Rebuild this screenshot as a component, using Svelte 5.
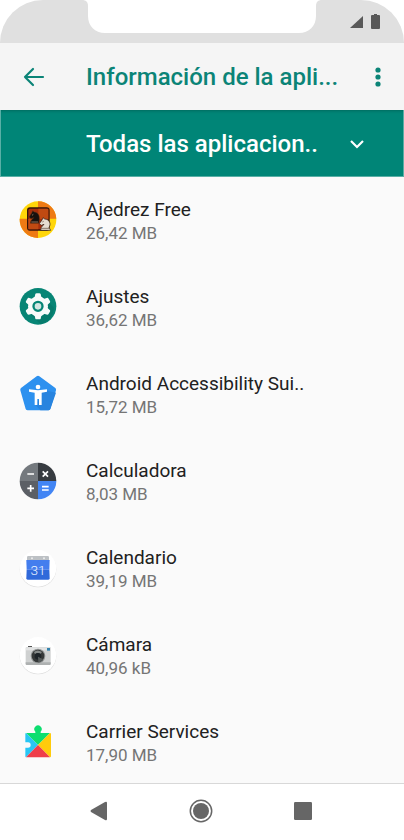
<script>
  const apps = [
    { id: 'chess', name: 'Ajedrez Free', size: '26,42 MB' },
    { id: 'settings', name: 'Ajustes', size: '36,62 MB' },
    { id: 'access', name: 'Android Accessibility Sui..', size: '15,72 MB' },
    { id: 'calc', name: 'Calculadora', size: '8,03 MB' },
    { id: 'calendar', name: 'Calendario', size: '39,19 MB' },
    { id: 'camera', name: 'Cámara', size: '40,96 kB' },
    { id: 'carrier', name: 'Carrier Services', size: '17,90 MB' }
  ];
  const teeth = [0, 60, 120, 180, 240, 300];
</script>

<div class="phone">
  <div class="status">
    <svg class="notch" width="240" height="33" viewBox="0 0 240 33" aria-hidden="true">
      <path d="M0 0H240C236 0 234 2 234 6V16C234 26 227 33 217 33H23C13 33 6 26 6 16V6C6 2 4 0 0 0Z" fill="#fff" />
    </svg>
    <svg class="signals" width="32" height="16" viewBox="0 0 32 16" aria-hidden="true">
      <path d="M13 2V14H0Z" fill="#595959" />
      <path d="M24 0H27V1H29Q30 1 30 2V14Q30 15 29 15H22Q21 15 21 14V2Q21 1 22 1H24Z" fill="#595959" />
    </svg>
  </div>

  <header>
    <button class="back" aria-label="Atrás">
      <svg width="22" height="20" viewBox="0 0 22 20">
        <path d="M20 10H2M10 2L2 10L10 18" fill="none" stroke="#0b8477" stroke-width="2.2" stroke-linecap="round" stroke-linejoin="round" />
      </svg>
    </button>
    <h1>Información de la apli...</h1>
    <button class="more" aria-label="Más opciones">
      <svg width="6" height="20" viewBox="0 0 6 20" fill="#0b8477">
        <circle cx="3" cy="3" r="2.6" /><circle cx="3" cy="10" r="2.6" /><circle cx="3" cy="17" r="2.6" />
      </svg>
    </button>
  </header>

  <div class="filter">
    <select aria-label="Filtrar aplicaciones">
      <option>Todas las aplicacion..</option>
    </select>
    <svg class="chevron" width="16" height="10" viewBox="0 0 16 10" aria-hidden="true">
      <path d="M2 2L8 8L14 2" fill="none" stroke="#fff" stroke-width="2.2" />
    </svg>
  </div>

  <ul>
    {#each apps as app (app.id)}
      <li>
        <svg class="icon" width="40" height="40" viewBox="24 30 120 120" aria-hidden="true">
          {#if app.id === 'chess'}
            <circle cx="84" cy="89" r="55" fill="#ffd60a" />
            <path d="M84 34A55 55 0 0 1 139 86H84ZM29 86H84V144A55 55 0 0 1 29 86Z" fill="#ee7a14" />
            <rect x="53" y="54" width="64" height="66" rx="7" fill="#a82f0c" stroke="#32150a" stroke-width="4" />
            <path d="M85 56H115V87H85ZM55 87H85V118H55Z" fill="#c04a12" />
            <path d="M61 100Q60 92 71 83L63 86L57 81L65 69L68 62L73 66C86 67 92 80 86 100Z" fill="#17110e" stroke="#6a3514" stroke-width="1.5" />
            <path d="M66 76L70 73M64 96H84" stroke="#c5a68a" stroke-width="2" />
            <path d="M92 121Q91 112 102 103L94 106L88 101L96 90L99 83L104 87C119 88 124 102 117 112L122 121Z" fill="#e6ddd2" stroke="#29150e" stroke-width="2" />
            <path d="M97 96L101 94M94 115H117" stroke="#584234" stroke-width="2" />
          {:else if app.id === 'settings'}
            <circle cx="84" cy="88" r="55" fill="#078575" />
            <path d="M91 51L132 92Q128 132 92 142L62 113Z" fill="#067b6c" />
            <g fill="#f8fbfa">
              <circle cx="84" cy="88" r="30" />
              {#each teeth as angle}
                <path d="M73 64L76 51Q77 49 80 49H88Q91 49 92 51L95 64Z" transform="rotate({angle} 84 88)" />
              {/each}
            </g>
            <circle cx="84" cy="88" r="13.5" fill="#d5e6e3" stroke="#078575" stroke-width="7" />
          {:else if app.id === 'access'}
            <path d="M80 37Q84 34 88 37L136 72Q139 75 138 79L121 135Q119 139 115 139H53Q49 139 47 135L31 79Q30 75 33 72Z" fill="#2d91ef" />
            <path d="M111 80L138 86L121 135Q119 139 115 139H91L76 122L95 95V84Z" fill="#2884df" />
            <circle cx="84" cy="69" r="7" fill="#fff" />
            <path d="M57 76Q84 81 111 76V83L95 86V123H87V105H82V123H74V86L57 83Z" fill="#fff" />
          {:else if app.id === 'calc'}
            <path d="M84 90V35A55 55 0 0 0 29 90Z" fill="#74797e" />
            <path d="M84 90V35A55 55 0 0 1 139 90Z" fill="#373b40" />
            <path d="M84 90H29A55 55 0 0 0 84 145Z" fill="#5b5f65" />
            <path d="M84 90H139A55 55 0 0 1 84 145Z" fill="#4285f4" />
            <path d="M52 69H72M98 61L114 77M114 61L98 77M62 102V122M52 112H72M96 107H116M96 117H116" stroke="#fff" stroke-width="5" />
          {:else if app.id === 'calendar'}
            <circle cx="84" cy="93" r="55" fill="#dcdcdc" />
            <circle cx="84" cy="91" r="55" fill="#fff" />
            <path d="M51 58Q51 54 55 54H113Q117 54 117 58V67H51Z" fill="#bdc1c5" />
            <circle cx="66" cy="61" r="3" fill="#eee" /><circle cx="102" cy="61" r="3" fill="#eee" />
            <path d="M49 66H119L118 95H50Z" fill="#447eee" />
            <path d="M50 95H118L119 121Q119 125 115 125H53Q49 125 49 121Z" fill="#3069da" />
            <text x="84" y="110" text-anchor="middle" font-size="41" font-weight="300" fill="#edf4ff">31</text>
          {:else if app.id === 'camera'}
            <circle cx="84" cy="93" r="55" fill="#dcdcdc" />
            <circle cx="84" cy="91" r="55" fill="#fff" />
            <path d="M54 67V63H66V67" fill="#555" />
            <rect x="47" y="66" width="75" height="53" rx="3" fill="#cfd1d1" />
            <path d="M47 112H122V117Q122 120 119 120H50Q47 120 47 117Z" fill="#aeb1b1" />
            <rect x="48" y="67" width="73" height="9" fill="#e3e4e4" />
            <rect x="111" y="69" width="9" height="8" fill="#3684ae" />
            <circle cx="84" cy="93" r="22" fill="#949797" />
            <circle cx="84" cy="93" r="19" fill="#353838" />
            <path d="M72 81Q82 72 96 81L91 87Q83 80 75 88Z" fill="#858988" />
            <circle cx="84" cy="94" r="10" fill="#1e2428" />
            <path d="M84 95L99 103Q94 112 85 113Z" fill="#565b5b" />
          {:else}
            <path d="M48 63H76V59A11 11 0 1 1 92 59V63H120L84 99Z" fill="#0dde70" />
            <path d="M48 63L84 99L48 136Q46 136 46 133V107H54A8 8 0 1 0 54 91H46V66Q46 63 48 63Z" fill="#28c6f5" />
            <path d="M120 63Q123 63 123 66V133Q123 136 120 136L84 99Z" fill="#ffcb0b" />
            <path d="M48 136L84 99L120 136Z" fill="#ef3e4a" />
          {/if}
        </svg>
        <div class="info">
          <span class="name">{app.name}</span>
          <span class="size">{app.size}</span>
        </div>
      </li>
    {/each}
  </ul>

  <nav>
    <button aria-label="Atrás">
      <svg width="24" height="24" viewBox="0 0 24 24"><path d="M20 4V20Q20 22 18 21L4 13Q3 12 4 11L18 3Q20 2 20 4Z" fill="#666" /></svg>
    </button>
    <button aria-label="Inicio">
      <svg width="24" height="24" viewBox="0 0 24 24"><circle cx="12" cy="12" r="10.7" fill="none" stroke="#666" stroke-width="1.5" /><circle cx="12" cy="12" r="8" fill="#666" /></svg>
    </button>
    <button aria-label="Recientes">
      <svg width="24" height="24" viewBox="0 0 24 24"><rect x="3" y="3" width="18" height="18" rx="1.2" fill="#666" /></svg>
    </button>
  </nav>
</div>

<style>
  :global(body) {
    background: #fff;
  }
  .phone {
    font-family: Roboto, "Noto Sans", sans-serif;
    color: #212121;
  }
  button {
    display: flex;
    align-items: center;
    justify-content: center;
    padding: 0;
    border: 0;
    background: none;
    cursor: pointer;
  }
  svg {
    display: block;
    flex: none;
  }
  .status {
    display: grid;
    grid-template-columns: 1fr 240px 1fr;
    height: 43px;
    background: #e0e0e0;
    border-radius: 43px 43px 0 0;
  }
  .notch {
    grid-column: 2;
  }
  .signals {
    justify-self: end;
    margin: 14px 22px 0 0;
  }
  header {
    display: flex;
    align-items: center;
    height: 67px;
    padding: 0 12px 0 20px;
    background: #f5f5f5;
  }
  .back {
    width: 28px;
    height: 40px;
    margin-right: 38px;
  }
  .more {
    width: 28px;
    height: 40px;
  }
  h1 {
    flex: 1;
    margin: 0;
    font-size: 24px;
    line-height: 32px;
    font-weight: 500;
    color: #0b8477;
    white-space: nowrap;
  }
  .filter {
    display: grid;
    align-items: center;
    box-sizing: border-box;
    height: 67px;
    padding-top: 2px;
    border: solid rgba(255, 255, 255, 0.35);
    border-width: 0 1px 1px;
    background: #008577;
    box-shadow: inset 0 3px 3px -2px #00695e;
  }
  select {
    grid-area: 1 / 1;
    width: 100%;
    height: 100%;
    padding: 0 60px 0 85px;
    border: 0;
    appearance: none;
    background: none;
    color: #fff;
    font-family: inherit;
    font-size: 24px;
    font-weight: 500;
  }
  .chevron {
    grid-area: 1 / 1;
    justify-self: end;
    margin-right: 38px;
    pointer-events: none;
  }
  ul {
    margin: 0;
    padding: 0;
    list-style: none;
    background: #fafafa;
  }
  li {
    display: flex;
    align-items: flex-start;
    gap: 28px;
    box-sizing: border-box;
    height: 87px;
    padding: 21px 18px 0;
  }
  li:last-child {
    height: 84px;
  }
  .icon {
    margin-top: 2px;
  }
  .info {
    display: flex;
    flex-direction: column;
  }
  .name {
    font-size: 19px;
    line-height: 24px;
  }
  .size {
    font-size: 17px;
    line-height: 22px;
    color: #757575;
  }
  nav {
    display: flex;
    justify-content: space-between;
    align-items: center;
    height: 54px;
    padding: 0 89px 0 87px;
    border-top: 1px solid #d8d8d8;
    background: #fff;
  }
</style>
